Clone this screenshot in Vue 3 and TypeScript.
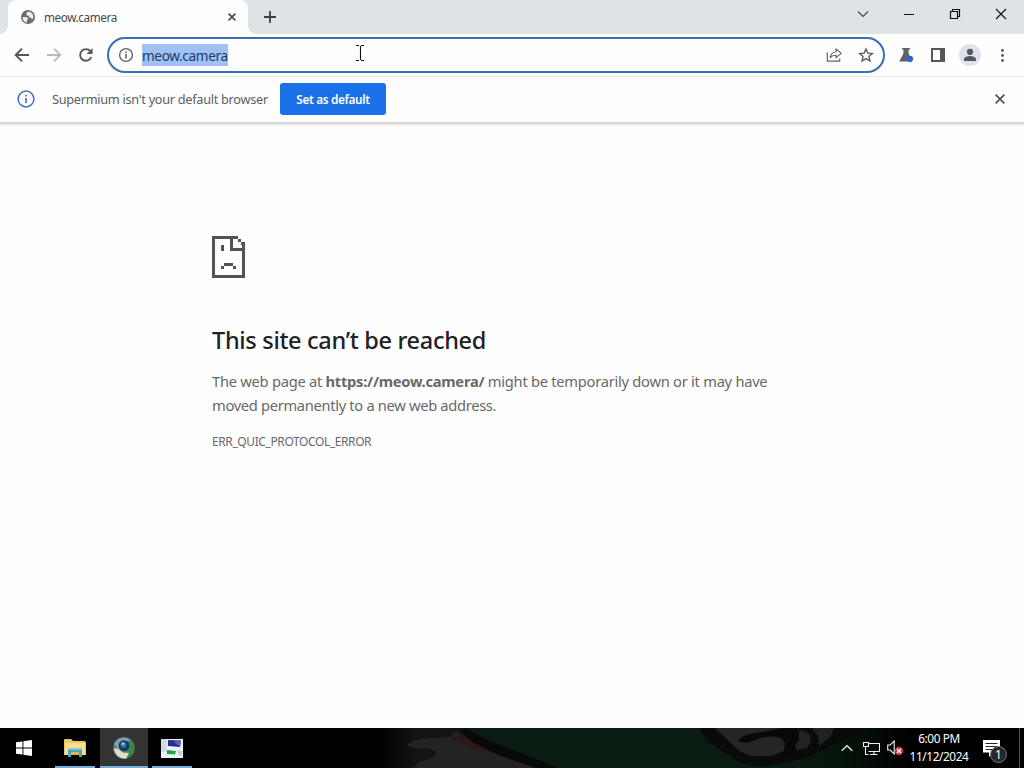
<script setup lang="ts">
import { ref } from 'vue'

const host = ref('meow.camera')
const showInfobar = ref(true)
const time = '6:00 PM'
const date = '11/12/2024'
</script>

<template>
  <div class="desktop">
    <div class="tab-strip">
      <div class="tab">
        <svg class="favicon" width="16" height="16" viewBox="0 0 16 16">
          <circle cx="8" cy="8" r="7" fill="#6a6e72" />
          <path d="M2.6 8.2 4.8 8l2.6.4.8 1.4-1.4 1.4.2 2.3C4.6 13.4 2.6 11 2.6 8.2M7 3.2 9.5 2.6 12.6 5 13.5 8.2 12 10.4 10.8 8.6 8.8 8.2 9 6.8 6.8 6.6 6.4 5z" fill="#eceef0" />
        </svg>
        <span class="tab-title">{{ host }}</span>
        <button class="tab-close" aria-label="Close tab">
          <svg width="8" height="8" viewBox="0 0 8 8"><path d="m.6.6 6.8 6.8M7.4.6.6 7.4" stroke="#45494d" stroke-width="1.7" /></svg>
        </button>
      </div>
      <button class="new-tab" aria-label="New tab">
        <svg width="12" height="12" viewBox="0 0 12 12"><path d="M6 0v12M0 6h12" stroke="#3c4043" stroke-width="1.8" /></svg>
      </button>
      <div class="window-controls">
        <button aria-label="Search tabs">
          <svg width="12" height="12" viewBox="0 0 12 12"><path d="m1 3.5 5 5 5-5" fill="none" stroke="#444" stroke-width="1.1" /></svg>
        </button>
        <button aria-label="Minimize">
          <svg width="12" height="12" viewBox="0 0 12 12"><path d="M1 6.5h10" stroke="#111" /></svg>
        </button>
        <button aria-label="Restore">
          <svg width="12" height="12" viewBox="0 0 12 12"><path d="M1.5 3.5h7v7h-7zM3.5 3.5v-2h7v7h-2" fill="none" stroke="#111" stroke-width="1.2" /></svg>
        </button>
        <button aria-label="Close">
          <svg width="12" height="12" viewBox="0 0 12 12"><path d="m1 1 10 10M11 1 1 11" stroke="#111" stroke-width="1.15" /></svg>
        </button>
      </div>
    </div>

    <div class="toolbar">
      <button class="tool back" aria-label="Back">
        <svg width="16" height="16" viewBox="0 0 16 16"><path d="M15 8H2M8 1.7 1.7 8 8 14.3" fill="none" stroke="#53575b" stroke-width="1.9" /></svg>
      </button>
      <button class="tool" aria-label="Forward">
        <svg width="16" height="16" viewBox="0 0 16 16"><path d="M1 8h13M8 1.7 14.3 8 8 14.3" fill="none" stroke="#b8babc" stroke-width="1.8" /></svg>
      </button>
      <button class="tool" aria-label="Reload">
        <svg width="16" height="16" viewBox="0 0 16 16">
          <path d="M13.3 10.2a5.8 5.8 0 1 1-.9-6" fill="none" stroke="#53575b" stroke-width="1.9" />
          <path d="M14.5 1v6h-6z" fill="#53575b" />
        </svg>
      </button>
      <div class="omnibox">
        <svg class="site-info" width="16" height="16" viewBox="0 0 16 16">
          <circle cx="8" cy="8" r="6.4" fill="none" stroke="#5f6368" stroke-width="1.4" />
          <path d="M8 7.1v4.3M8 4.4V6" stroke="#5f6368" stroke-width="1.6" />
        </svg>
        <span class="url">{{ host }}</span>
        <svg class="share" width="16" height="16" viewBox="0 0 16 16">
          <path d="M1.3 5.2v9h12.4v-2.7" fill="none" stroke="#63676b" stroke-width="1.2" />
          <path d="M10 1.9 15.2 6.4 10 10.7V8.2c-2.6 0-4.5.7-6 2.7.6-3.5 2.6-5.8 6-6.2z" fill="none" stroke="#63676b" stroke-width="1.1" />
        </svg>
        <svg class="star" width="16" height="16" viewBox="0 0 16 16">
          <path d="m8 1.9 1.8 4.2 4.6.4-3.5 3 1.1 4.5-4-2.4L4 14l1.1-4.5-3.5-3 4.6-.4z" fill="none" stroke="#53575b" stroke-width="1.3" />
        </svg>
      </div>
      <button class="tool labs" aria-label="Experiments">
        <svg width="16" height="16" viewBox="0 0 16 16">
          <path d="M4 1h8v1.6h-1.4V6.5l3.6 7.9H1.2L5.4 6.5V2.6H4z" fill="#5f6368" />
          <circle cx="12" cy="11.8" r="3.1" fill="#2864d8" />
        </svg>
      </button>
      <button class="tool" aria-label="Side panel">
        <svg width="16" height="16" viewBox="0 0 16 16"><path d="M1 1h14v14H1zM3 3v10h7V3z" fill="#54585c" fill-rule="evenodd" /></svg>
      </button>
      <button class="tool" aria-label="Profile">
        <svg width="22" height="22" viewBox="0 0 22 22">
          <circle cx="11" cy="11" r="11" fill="#dfe2e9" />
          <circle cx="11" cy="7.8" r="3.1" fill="#53575f" />
          <path d="M5 17v-2c0-2 3.7-3 6-3s6 1 6 3v2z" fill="#53575f" />
        </svg>
      </button>
      <button class="tool" aria-label="Menu">
        <svg width="16" height="16" viewBox="0 0 16 16" fill="#53575b"><circle cx="8.5" cy="3.5" r="1.4" /><circle cx="8.5" cy="8.5" r="1.4" /><circle cx="8.5" cy="13.5" r="1.4" /></svg>
      </button>
      <svg class="ibeam" width="8" height="16" viewBox="0 0 8 16"><path d="M0 .5h3M5 .5h3M0 15.5h3M5 15.5h3M4.5 1v14" stroke="#111" stroke-width="1.1" /></svg>
    </div>

    <div v-if="showInfobar" class="infobar">
      <svg class="info-icon" width="18" height="18" viewBox="0 0 18 18">
        <circle cx="9" cy="9" r="7.9" fill="none" stroke="#3b6fc4" stroke-width="1.5" />
        <path d="M9 8v5M9 4.8v1.8" stroke="#3b6fc4" stroke-width="1.6" />
      </svg>
      <span class="info-text">Supermium isn't your default browser</span>
      <button class="set-default"><span>Set as default</span></button>
      <button class="dismiss" aria-label="Dismiss" @click="showInfobar = false">
        <svg width="10" height="10" viewBox="0 0 10 10"><path d="m.6.6 8.8 8.8M9.4.6.6 9.4" stroke="#53575b" stroke-width="1.8" /></svg>
      </button>
    </div>

    <main class="page">
      <svg class="sad-page" width="33" height="42" viewBox="0 0 33 42" fill="#535353" shape-rendering="crispEdges">
        <path d="M0 0h26v3H3v36h27V15H18V3h3v9h12v30H0z" />
        <path d="M26 3h3v3h-3zM29 6h4v6h-3V9h-1zM9 9h3v6H9zM12 27h9v3h-9zM9 30h3v3H9zM21 30h3v3h-3z" />
      </svg>
      <h1>This site can’t be reached</h1>
      <p class="summary">
        <span class="line one">The web page at <strong>https://meow.camera/</strong> might be temporarily down or it may have</span>
        <span class="line two">moved permanently to a new web address.</span>
      </p>
      <div class="error-code">ERR_QUIC_PROTOCOL_ERROR</div>
    </main>

    <footer class="taskbar">
      <svg class="wallpaper" width="1024" height="40" viewBox="0 0 1024 40">
        <defs>
          <linearGradient id="fade" x1="0" x2="1">
            <stop offset="0" stop-color="#000" />
            <stop offset=".2" stop-color="#131313" />
            <stop offset="1" stop-color="#111" />
          </linearGradient>
          <linearGradient id="dusk" x1="0" x2="1">
            <stop offset="0" stop-color="#09180f" />
            <stop offset=".35" stop-color="#07140b" />
            <stop offset="1" stop-color="#000" />
          </linearGradient>
        </defs>
        <path d="M380 0h90l90 40H384z" fill="url(#fade)" />
        <path d="M462 0h340v40H558l-40-16z" fill="#0a1b12" />
        <path d="M800 0h110v40H800z" fill="url(#dusk)" />
        <path d="M407 18q3-6 22-8l20-1 7-6 16 12 32 12 42 13H414l6-7q18-3 15-10-6-4-16-2z" fill="#242222" />
        <path d="m450 10 10-4 30 18-18-5z" fill="#2b191a" />
        <path d="m466 0 20 12 32 12 40 16h-22l-38-13-24-12-14-13z" fill="#080a09" />
        <path d="M699 0h163l-14 10-18 8-24 12-38 8q-22 2-38-10L708 14z" fill="#080b0a" />
        <path d="M715 0h78l-16 4 8 10-1 9-12 5h-18q-14-2-22-12z" fill="#252525" />
        <path d="M738 13q5-7 17-8l14-2 14-3h13l4 10-3 18-16 2 5-13-4-7q-10-3-21 0l-14 5z" fill="#080808" />
        <path d="M799 2q12 1 12 11l-4 7-11 2-1-5 4-5zM812 0h22l-3 8-12 10-1-10z" fill="#222" />
      </svg>

      <button class="task start" aria-label="Start">
        <svg width="16" height="16" viewBox="0 0 16 16" fill="#fff"><path d="M0 2.3 6.5 1.4v6.1H0zM7.4 1.3 16 0v7.5H7.4zM0 8.4h6.5v6.2L0 13.7zM7.4 8.4H16V16l-8.6-1.3z" /></svg>
      </button>
      <button class="task open" aria-label="File Explorer">
        <svg width="22" height="20" viewBox="0 0 22 20">
          <path d="M0 2q0-1 1-1h6l2 2h11q2 0 2 2v12H0z" fill="#e9ca68" />
          <path d="M1 5h20v12H1z" fill="#f8df8a" />
          <path d="M4 10h14v9h-3v-5H7v5H4z" fill="#4ba5b7" />
          <path d="M7 14h8v3H7z" fill="#d8b85b" />
          <path d="M4 10h14v2H4z" fill="#82cadb" />
        </svg>
      </button>
      <button class="task open active" aria-label="Supermium">
        <svg width="22" height="22" viewBox="0 0 22 22">
          <circle cx="11" cy="11" r="10.8" fill="#477c76" />
          <path d="M1 7A10.8 10.8 0 0 1 18 3L11 6 6 14z" fill="#7f9fb2" />
          <path d="M16 2a10.8 10.8 0 0 1-4 19.8l4-9z" fill="#348848" />
          <path d="M.5 11 5 12l5 3.5 6 .5-3 5.7Q3 22 .5 11" fill="#e4dcc6" />
          <circle cx="11" cy="8.6" r="5.4" fill="#193b58" />
          <circle cx="10.5" cy="8.1" r="3" fill="#3271aa" />
          <circle cx="10" cy="6.8" r="1.4" fill="#a9cce1" />
        </svg>
      </button>
      <button class="task open" aria-label="Remote display">
        <svg width="22" height="19" viewBox="0 0 22 19">
          <path d="M0 0h22v19H0z" fill="#eef4f6" />
          <path d="M0 0h6v13H0z" fill="#cfdde2" />
          <path d="m7 1 13 .5L19 8 7 7z" fill="#2c2d92" />
          <path d="m13 1.2 7 .3L19 7l-4-2z" fill="#5c64b4" />
          <path d="m6 11 9 1-1 3.5-8-.5z" fill="#23a24a" />
          <path d="m16 11 5 1v5l-4-1z" fill="#c2d0d6" />
        </svg>
      </button>

      <div class="tray">
        <svg class="chevron" width="12" height="8" viewBox="0 0 12 8"><path d="m.7 6.7 5.3-5 5.3 5" fill="none" stroke="#e8e8e8" stroke-width="1.3" /></svg>
        <svg class="network" width="17" height="15" viewBox="0 0 17 15">
          <path d="M5.5 2.5h11v8h-11M11 10.5v3M7 13.5h7.5M.5 1.5h5v4h-5zM2.5 5.5v8h3" fill="none" stroke="#eee" stroke-width="1.1" />
        </svg>
        <svg class="volume" width="17" height="16" viewBox="0 0 17 16">
          <path d="M.7 5h2.5l4-4v13l-4-4H.7z" fill="none" stroke="#eee" stroke-width="1.1" />
          <circle cx="12" cy="11" r="4.2" fill="#cf3547" />
          <path d="m10 9 4 4M14 9l-4 4" stroke="#fff" stroke-width="1.3" />
        </svg>
        <div class="clock">
          <span class="time">{{ time }}</span>
          <span class="date">{{ date }}</span>
        </div>
        <div class="notifications">
          <svg width="17" height="17" viewBox="0 0 17 17">
            <path d="M0 0h17v12.5h-7L6 17v-4.5H0z" fill="#fff" />
            <path d="M2.5 3.5h12M2.5 6.5h12M2.5 9.5H11" stroke="#222" />
          </svg>
          <span class="badge">1</span>
        </div>
        <div class="show-desktop"></div>
      </div>
    </footer>
  </div>
</template>

<style>
body {
  margin: 0;
  overflow: hidden;
}
</style>

<style scoped>
.desktop {
  width: 1024px;
  height: 768px;
  display: flex;
  flex-direction: column;
  background: #fefefe;
  font-family: "Noto Sans", "Open Sans", sans-serif;
  overflow: hidden;
}

button {
  padding: 0;
  border: 0;
  background: none;
  font-family: inherit;
  display: flex;
  align-items: center;
  justify-content: center;
}

svg {
  display: block;
  flex-shrink: 0;
}

span {
  white-space: nowrap;
}

.tab-strip {
  height: 34px;
  flex-shrink: 0;
  display: flex;
  background: #dee3e6;
}

.tab {
  position: relative;
  width: 240px;
  height: 34px;
  margin-left: 8px;
  box-sizing: border-box;
  padding: 0 12px;
  display: flex;
  align-items: center;
  background: #fefefe;
  border-radius: 8px 8px 0 0;
}

.tab::before,
.tab::after {
  content: "";
  position: absolute;
  bottom: 0;
  width: 8px;
  height: 8px;
}

.tab::before {
  left: -8px;
  background: radial-gradient(circle at 0 0, transparent 7.5px, #fefefe 8px);
}

.tab::after {
  right: -8px;
  background: radial-gradient(circle at 100% 0, transparent 7.5px, #fefefe 8px);
}

.tab-title {
  margin-left: 8px;
  font-size: 11.7px;
  letter-spacing: -0.37px;
  color: #45494d;
}

.tab-close {
  margin-left: auto;
}

.new-tab {
  width: 28px;
  margin-left: 8px;
}

.window-controls {
  margin-left: auto;
  display: flex;
  height: 28px;
}

.window-controls button {
  width: 46px;
}

.toolbar {
  position: relative;
  height: 43px;
  box-sizing: border-box;
  flex-shrink: 0;
  display: flex;
  align-items: center;
  padding: 0 6px;
  border-bottom: 1px solid #e6e9eb;
}

.tool {
  width: 32px;
}

.omnibox {
  width: 778px;
  height: 36px;
  box-sizing: border-box;
  margin-left: 5px;
  padding: 0 9px;
  display: flex;
  align-items: center;
  border: 2px solid #3770b5;
  border-radius: 18px;
}

.url {
  width: 86px;
  height: 22px;
  margin-left: 8px;
  line-height: 23px;
  font-size: 13.6px;
  letter-spacing: -0.35px;
  color: #1c3c65;
  background: #9fc2f5;
}

.share {
  margin-left: auto;
}

.star {
  margin-left: 16px;
}

.labs {
  margin-left: 5px;
}

.ibeam {
  position: absolute;
  left: 356px;
  top: 11px;
}

.infobar {
  height: 47px;
  box-sizing: border-box;
  flex-shrink: 0;
  display: flex;
  align-items: center;
  padding: 0 19px 1px 17px;
  border-bottom: 2px solid #d4d6d7;
  box-shadow: 0 1px 2px #e5e6e7;
}

.info-text {
  width: 216px;
  margin-left: 17px;
  font-size: 12.75px;
  letter-spacing: -0.3px;
  color: #5a5e62;
}

.set-default {
  width: 106px;
  height: 32px;
  margin-left: 12px;
  border-radius: 3px;
  background: #1a70e8;
  color: #fff;
  font-size: 11.8px;
  font-weight: 600;
  letter-spacing: -0.35px;
}

.dismiss {
  margin-left: auto;
}

.page {
  flex: 1;
  box-sizing: border-box;
  padding: 112px 0 0 212px;
  color: #686868;
}

h1 {
  margin: 46px 0 0;
  font-size: 23.5px;
  font-weight: 500;
  line-height: 32px;
  letter-spacing: -0.31px;
  color: #202124;
  white-space: nowrap;
}

.summary {
  margin: 13px 0 0;
  font-size: 14.7px;
  line-height: 24px;
}

.line {
  display: block;
}

.one {
  letter-spacing: -0.265px;
}

.two {
  letter-spacing: -0.32px;
}

.error-code {
  margin-top: 15px;
  font-size: 12px;
  line-height: 20px;
  letter-spacing: -0.4px;
}

.taskbar {
  position: relative;
  height: 40px;
  flex-shrink: 0;
  display: flex;
  background: #000;
}

.wallpaper {
  position: absolute;
  left: 0;
  top: 0;
}

.task {
  position: relative;
  width: 48px;
  height: 40px;
}

.start {
  margin-right: 3px;
}

.task.open::after {
  content: "";
  position: absolute;
  left: 4px;
  right: 4px;
  bottom: 0;
  height: 2px;
  background: #74aeda;
}

.task.active {
  margin-left: 1px;
  background: #343434;
}

.task.active::after {
  left: 0;
  right: 0;
}

.tray {
  position: relative;
  margin-left: auto;
  display: flex;
  align-items: center;
  color: #fff;
}

.network {
  margin-left: 10px;
}

.volume {
  margin-left: 7px;
}

.clock {
  width: 66px;
  margin-left: 2px;
  padding-bottom: 2px;
  display: flex;
  flex-direction: column;
  align-items: center;
  font-size: 11.8px;
  line-height: 18px;
  letter-spacing: -0.4px;
}

.notifications {
  position: relative;
  width: 36px;
  margin-left: 11px;
}

.badge {
  position: absolute;
  left: 7px;
  top: 6px;
  width: 17px;
  height: 17px;
  box-sizing: border-box;
  border: 1px solid #777;
  border-radius: 50%;
  background: #272727;
  font-size: 12px;
  line-height: 15px;
  text-align: center;
}

.show-desktop {
  width: 4px;
  height: 40px;
  border-left: 1px solid #505050;
}
</style>
